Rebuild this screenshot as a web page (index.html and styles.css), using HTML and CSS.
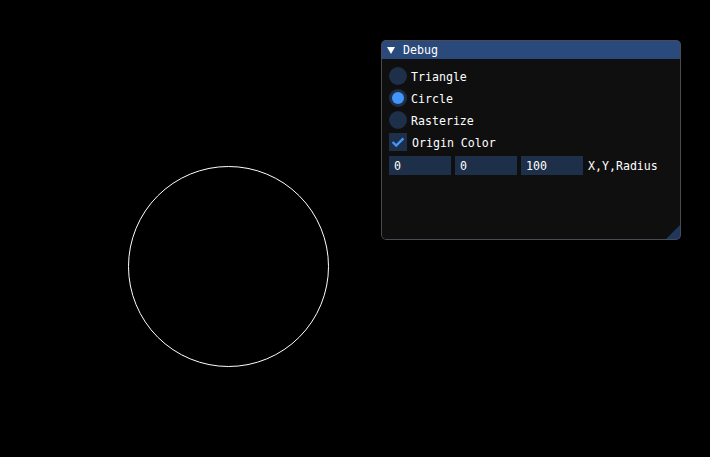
FILE: index.html
```html
<!DOCTYPE html>
<html>
<head>
<meta charset="utf-8">
<link rel="stylesheet" href="styles.css">
</head>
<body>
<div class="canvas">
  <svg class="shape" width="220" height="220" viewBox="0 0 220 220">
    <circle cx="108.5" cy="108.5" r="100" fill="none" stroke="#ffffff" stroke-width="1"/>
  </svg>
  <div class="window">
    <div class="title">
      <span class="arrow"></span>
      <span class="title-text">Debug</span>
    </div>
    <div class="content">
      <div class="row"><span class="radio"></span><span class="label">Triangle</span></div>
      <div class="row"><span class="radio on"><span class="dot"></span></span><span class="label">Circle</span></div>
      <div class="row"><span class="radio"></span><span class="label">Rasterize</span></div>
      <div class="row"><span class="check"><svg width="18" height="18" viewBox="0 0 18 18"><polyline points="3.6,9 7.2,12.6 14.4,5.4" fill="none" stroke="#4296fa" stroke-width="2.4"/></svg></span><span class="label check-label">Origin Color</span></div>
      <div class="row inputs">
        <span class="input">0</span>
        <span class="input">0</span>
        <span class="input">100</span>
        <span class="label">X,Y,Radius</span>
      </div>
    </div>
    <svg class="grip" width="16" height="16" viewBox="0 0 16 16"><polygon points="16,0 16,16 0,16" fill="#1f375a"/></svg>
  </div>
</div>
</body>
</html>
```
FILE: styles.css
```css
html, body {
  margin: 0;
  padding: 0;
  background: #000000;
}
.canvas {
  position: relative;
  width: 710px;
  height: 457px;
  background: #000000;
  overflow: hidden;
  font-family: "DejaVu Sans Mono", "Liberation Mono", monospace;
  font-size: 11.6px;
  color: #ffffff;
}
.shape {
  position: absolute;
  left: 120px;
  top: 158px;
}
.window {
  position: absolute;
  left: 381px;
  top: 40px;
  width: 300px;
  height: 200px;
  background: #0f0f0f;
  border-radius: 5px;
  overflow: hidden;
  display: flex;
  flex-direction: column;
}
.window::after {
  content: "";
  position: absolute;
  inset: 0;
  border: 1px solid #4a4a55;
  border-radius: 5px;
  pointer-events: none;
}
.title {
  height: 19px;
  box-sizing: border-box;
  padding-top: 2px;
  background: #294a7a;
  display: flex;
  align-items: center;
  padding-left: 6px;
  flex-shrink: 0;
}
.arrow {
  width: 0;
  height: 0;
  border-left: 4px solid transparent;
  border-right: 4px solid transparent;
  border-top: 7px solid #ffffff;
  margin-right: 8px;
}
.title-text {
  line-height: 17px;
}
.content {
  padding: 8px 8px;
  display: flex;
  flex-direction: column;
  gap: 4px;
}
.row {
  display: flex;
  align-items: flex-start;
  height: 18px;
}
.radio {
  width: 18px;
  height: 18px;
  border-radius: 50%;
  background: #1d2f49;
  display: flex;
  align-items: center;
  justify-content: center;
  flex-shrink: 0;
}
.dot {
  width: 12px;
  height: 12px;
  border-radius: 50%;
  background: #4296fa;
}
.check {
  width: 18px;
  height: 18px;
  background: #1d2f49;
  flex-shrink: 0;
}
.check svg {
  display: block;
}
.label {
  margin-left: 4px;
  line-height: 18px;
  padding-top: 1px;
  white-space: nowrap;
}
.check-label {
  margin-left: 5px;
}
.inputs {
  gap: 4px;
  height: 19px;
  margin-top: 1px;
}
.input {
  width: 62px;
  height: 19px;
  background: #1d2f49;
  box-sizing: border-box;
  padding-left: 5px;
  padding-top: 1px;
  line-height: 18px;
}
.inputs .label {
  margin-left: 1px;
}
.grip {
  position: absolute;
  right: 0;
  bottom: 0;
}
```
